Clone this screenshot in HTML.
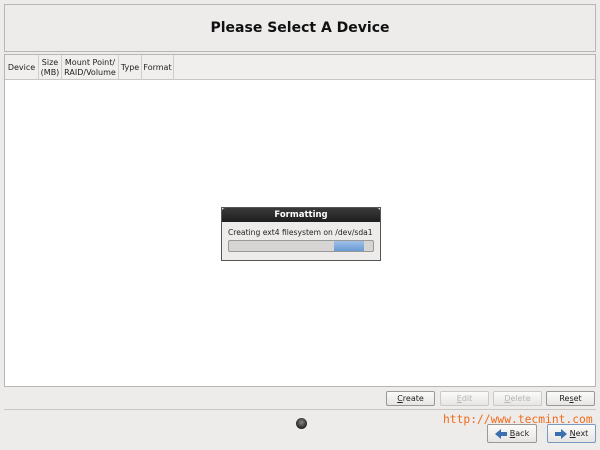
<!DOCTYPE html>
<html><head><style>
*{margin:0;padding:0;box-sizing:border-box}
body{width:600px;height:450px;background:#edeceb;font-family:"DejaVu Sans","Liberation Sans",sans-serif;position:relative;overflow:hidden;color:#222}
.hdr{position:absolute;left:4px;top:4px;width:592px;height:48px;border:1px solid #b8b6b2;background:#edeceb;text-align:center;font-weight:bold;font-size:14px;line-height:46px;color:#111}
.tbl{position:absolute;left:4px;top:54px;width:592px;height:333px;border:1px solid #b8b6b2;background:#fff}
.th{position:absolute;left:0;top:0;width:590px;height:25px;background:#f0efed;border-bottom:1px solid #c8c6c2;font-size:8px;line-height:9.5px;color:#222}
.th div{position:absolute;top:0;height:25px;border-right:1px solid #d0cec9;display:flex;align-items:center;justify-content:center;text-align:center;white-space:nowrap}
.dlg{position:absolute;left:221px;top:207px;width:160px;height:54px;border:1px solid #555;background:#edeceb}
.dt{height:14px;background:linear-gradient(#3a3a3a,#1e1e1e);color:#fff;font-weight:bold;font-size:8.5px;text-align:center;line-height:14px;border-radius:3px 3px 0 0}
.dm{font-size:7.6px;padding:6px 0 0 6px;white-space:nowrap}
.pb{position:absolute;left:6px;top:32px;width:146px;height:12px;border:1px solid #999;border-radius:2px;background:#d6d5d3}
.pf{position:absolute;left:105px;top:0;width:30px;height:10px;background:linear-gradient(#9ec0e8,#6a9ad4)}
.btn{position:absolute;height:15px;border:1px solid #9a9894;border-radius:2px;background:linear-gradient(#fbfbfa,#e6e5e3);font-size:8px;text-align:center;line-height:13px}
.dis{color:#b8b6b2;border-color:#cbc9c5}
.sep{position:absolute;left:4px;top:409px;width:592px;height:1px;background:#c8c6c2}
.url{position:absolute;left:443px;top:413px;color:#f26a1a;font-size:11.3px;font-family:"DejaVu Sans Mono","Liberation Mono",monospace;white-space:nowrap}
.ar{display:inline-block;vertical-align:middle;margin-right:3px}
</style></head><body>
<div class="hdr">Please Select A Device</div>
<div class="tbl"><div class="th">
<div style="left:0;width:34px">Device</div>
<div style="left:34px;width:23px">Size<br>(MB)</div>
<div style="left:57px;width:57px">Mount Point/<br>RAID/Volume</div>
<div style="left:114px;width:23px">Type</div>
<div style="left:137px;width:32px">Format</div>
</div></div>
<div class="dlg"><div class="dt">Formatting</div><div class="dm">Creating ext4 filesystem on /dev/sda1</div><div class="pb"><div class="pf"></div></div></div>
<div class="btn" style="left:386px;top:391px;width:49px"><u>C</u>reate</div>
<div class="btn dis" style="left:440px;top:391px;width:49px"><u>E</u>dit</div>
<div class="btn dis" style="left:493px;top:391px;width:49px"><u>D</u>elete</div>
<div class="btn" style="left:546px;top:391px;width:49px">Re<u>s</u>et</div>
<div class="sep"></div>
<div style="position:absolute;left:296px;top:418px;width:11px;height:11px;border-radius:50%;background:radial-gradient(circle at 50% 40%,#888,#222 70%)"></div>
<div class="url">http://www.tecmint.com</div>
<div class="btn" style="left:487px;top:424px;width:50px;height:19px;line-height:17px"><svg class="ar" width="12" height="10"><path d="M0 5L6 0V3H12V7H6V10Z" fill="#3a6fb0"/></svg><u>B</u>ack</div>
<div class="btn" style="left:547px;top:424px;width:49px;height:19px;line-height:17px;border-color:#7a9ac4"><svg class="ar" width="12" height="10"><path d="M12 5L6 0V3H0V7H6V10Z" fill="#3a6fb0"/></svg><u>N</u>ext</div>
</body></html>
